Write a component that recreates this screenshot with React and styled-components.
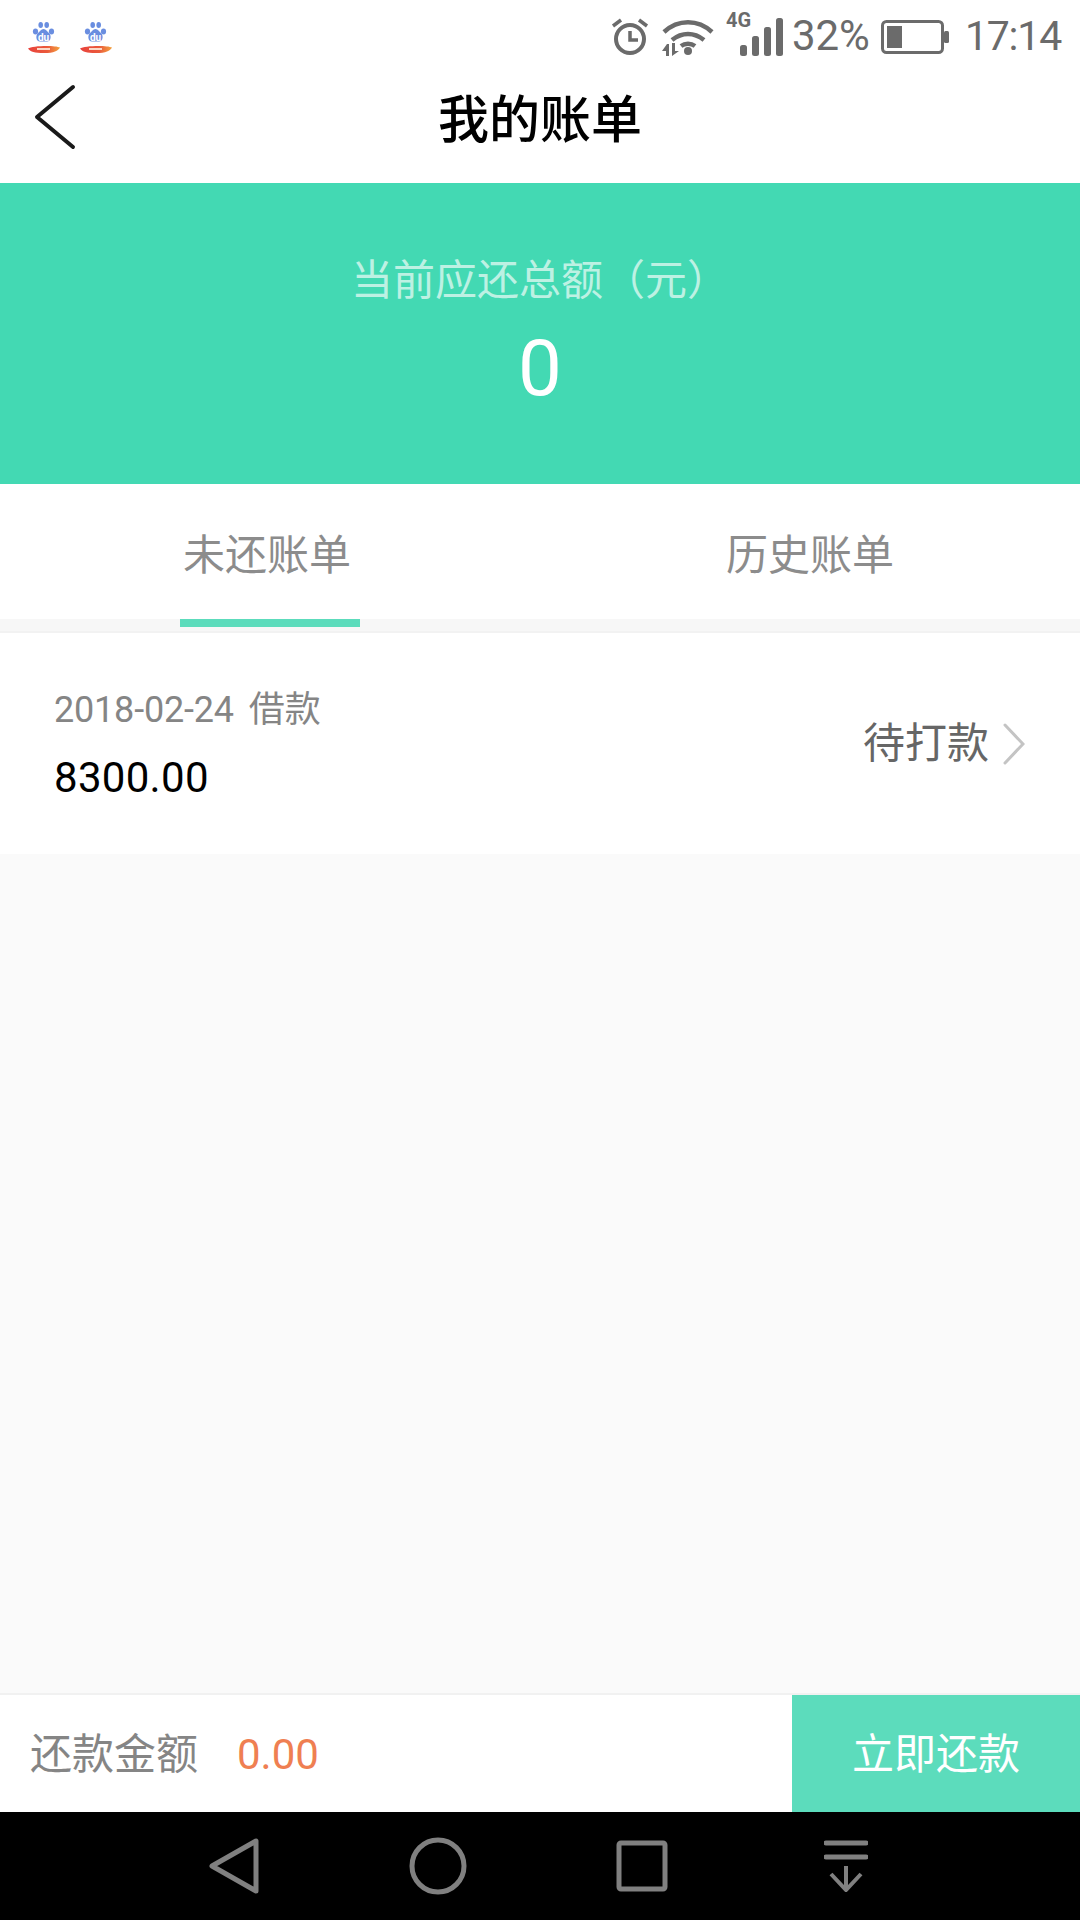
import React from "react";
import styled, { createGlobalStyle } from "styled-components";

const GlobalStyle = createGlobalStyle`
  html, body {
    margin: 0;
    padding: 0;
    background: #fafafa;
  }
  * {
    box-sizing: border-box;
  }
`;

const FONT = `Roboto, "Noto Sans CJK SC", sans-serif`;

const Page = styled.div`
  width: 1080px;
  height: 1920px;
  display: flex;
  flex-direction: column;
  background: #fafafa;
  font-family: ${FONT};
  overflow: hidden;
`;

const StatusBar = styled.div`
  height: 68px;
  background: #fff;
  display: flex;
  align-items: flex-start;
  padding: 12px 19px 0 28px;
  color: #6b6b6b;
`;

const AppIcons = styled.div`
  display: flex;
  gap: 20px;
  padding-top: 9px;
`;

const StatusRight = styled.div`
  margin-left: auto;
  display: flex;
  align-items: flex-start;
`;

const StatusText = styled.span`
  font-size: ${({ $size }) => $size || "41px"};
  line-height: 48px;
  letter-spacing: ${({ $spacing }) => $spacing || "0"};
  margin-left: ${({ $left }) => $left || "0"};
`;

const StatusIcon = styled.svg`
  display: block;
  flex: none;
  margin-left: ${({ $left }) => $left || "0"};
  margin-top: ${({ $top }) => $top || "0"};
`;

const TitleBar = styled.div`
  height: 115px;
  background: #fff;
  display: flex;
  align-items: center;
  justify-content: center;
  padding-bottom: 9px;
  position: relative;
`;

const BackIcon = styled.svg`
  position: absolute;
  left: 34px;
  top: 16px;
`;

const Title = styled.h1`
  margin: 0;
  font-size: 51px;
  font-weight: 500;
  line-height: 70px;
  color: #000;
`;

const Summary = styled.div`
  height: 301px;
  background: #43d9b3;
  display: flex;
  flex-direction: column;
  align-items: center;
  padding-top: 68px;
`;

const SummaryLabel = styled.div`
  font-size: 42px;
  line-height: 60px;
  color: #bdf1e3;
  white-space: pre;
`;

const SummaryValue = styled.div`
  font-size: 78px;
  line-height: 92px;
  color: #fff;
  margin-top: 12px;
`;

const Tabs = styled.div`
  height: 135px;
  background: #fff;
  display: grid;
  grid-template-columns: 540px 540px;
`;

const Tab = styled.div`
  display: flex;
  justify-content: center;
  padding-top: 42px;
  padding-right: ${({ $inset }) => $inset || "0"};
  font-size: 42px;
  line-height: 60px;
  color: #8c8c8c;
`;

const TabTrack = styled.div`
  height: 14px;
  background: #f7f7f7;
  border-bottom: 2px solid #f2f2f2;
  padding-left: 180px;
`;

const TabIndicator = styled.div`
  width: 180px;
  height: 8px;
  background: #5cdcbc;
`;

const BillRow = styled.div`
  height: 221px;
  background: #fff;
  display: flex;
  align-items: center;
  justify-content: space-between;
  padding: 0 55px 0 54px;
`;

const BillInfo = styled.div`
  display: flex;
  flex-direction: column;
  gap: 18px;
  margin-top: 1px;
`;

const BillMeta = styled.div`
  font-size: 36px;
  line-height: 50px;
  color: #858585;
  display: flex;
  gap: 15px;
`;

const BillDate = styled.span`
  letter-spacing: -0.2px;
`;

const BillAmount = styled.div`
  font-size: 42px;
  line-height: 50px;
  letter-spacing: 0.3px;
  color: #000;
`;

const BillStatus = styled.div`
  display: flex;
  align-items: center;
  gap: 14px;
  font-size: 42px;
  line-height: 60px;
  color: #666;
  margin-top: 1px;
`;

const Spacer = styled.div`
  flex: 1;
  background: #fafafa;
`;

const PayBar = styled.div`
  height: 119px;
  background: #fff;
  border-top: 2px solid #f1f1f1;
  display: flex;
  align-items: stretch;
`;

const PayLabel = styled.span`
  font-size: 42px;
  line-height: 119px;
  color: #858585;
  margin-left: 30px;
`;

const PayAmount = styled.span`
  font-size: 42px;
  line-height: 119px;
  color: #ef7f52;
  margin-left: 39px;
`;

const PayButton = styled.div`
  margin-left: auto;
  width: 288px;
  background: #5cdcbc;
  color: #fff;
  font-size: 42px;
  line-height: 119px;
  text-align: center;
`;

const NavBar = styled.div`
  height: 108px;
  background: #000;
  display: flex;
  align-items: center;
  padding-left: 209px;
`;

const NavIcon = styled.svg`
  display: block;
  flex: none;
  margin-left: ${({ $left }) => $left || "0"};
`;

const BaiduIcon = () => (
  <svg width="32" height="33" viewBox="0 0 32 33">
    <defs>
      <linearGradient id="ribbon" x1="0" x2="1" y1="0" y2="0">
        <stop offset="0" stopColor="#e8413c" />
        <stop offset="0.6" stopColor="#ea5a3c" />
        <stop offset="1" stopColor="#f3a23d" />
      </linearGradient>
    </defs>
    <g fill="#6a8ee0">
      <ellipse cx="7.5" cy="10.5" rx="2.6" ry="3" />
      <ellipse cx="12.7" cy="4" rx="2.3" ry="3" />
      <ellipse cx="18.7" cy="4" rx="2.3" ry="3" />
      <ellipse cx="23.5" cy="10.5" rx="2.6" ry="3" />
      <path d="M15.5 8c2.6 0 3.5 2.500 5.500 4 2.600 2.200 2.200 8.500-2 8.500h-7c-4.200 0-4.600-6.300-2-8.500 2-1.500 2.900-4 5.500-4z" />
    </g>
    <text x="15.500" y="19.500" textAnchor="middle" fontSize="10" fontWeight="700" fontFamily="Roboto, sans-serif" fill="#fff">du</text>
    <path d="M0 27.500C4 24.500 27 24 32 26.500 30 30 26 32 16 32S3 31 0 27.500z" fill="url(#ribbon)" />
    <rect x="9" y="27" width="13" height="2" fill="#fbd9c8" />
  </svg>
);

export default function App() {
  return (
    <Page>
      <GlobalStyle />
      <StatusBar>
        <AppIcons>
          <BaiduIcon />
          <BaiduIcon />
        </AppIcons>
        <StatusRight>
          <StatusIcon width="38" height="38" viewBox="0 0 38 38" $top="5px" fill="none" stroke="#6b6b6b">
            <circle cx="19" cy="22" r="14" strokeWidth="4" />
            <path d="M19 14v9h8" strokeWidth="3.500" />
            <path d="M2 9l8-6M36 9l-8-6" strokeWidth="3.500" />
          </StatusIcon>
          <StatusIcon width="54" height="40" viewBox="0 0 54 40" $left="12px" $top="5px" fill="none" stroke="#6b6b6b">
            <path d="M3 15C17 2 37 2 51 15" strokeWidth="4.500" />
            <path d="M11 23c10-8 22-8 32 0" strokeWidth="4.500" />
            <path d="M20 29c4-3 10-3 14 0" strokeWidth="4.500" />
            <circle cx="27" cy="34" r="4" fill="#6b6b6b" stroke="none" />
            <path d="M6 27l-5 7h4v5h3V27zM11 26h3v8h4l-7 5z" fill="#6b6b6b" stroke="none" />
          </StatusIcon>
          <StatusIcon width="58" height="50" viewBox="0 -6 58 50" $left="11px" $top="-6px" fill="#6b6b6b">
            <text x="0" y="15" fontFamily="Roboto, sans-serif" fontWeight="700" fontSize="20">4G</text>
            <rect x="14" y="33" width="7" height="11" rx="2.500" />
            <rect x="26" y="24" width="7" height="20" rx="2.500" />
            <rect x="38" y="15" width="7" height="29" rx="2.500" />
            <rect x="50" y="6" width="7" height="38" rx="2.500" />
          </StatusIcon>
          <StatusText $left="8px" $size="42px">32%</StatusText>
          <StatusIcon width="68" height="34" viewBox="0 0 68 34" $left="11px" $top="8px" fill="none">
            <rect x="1.500" y="1.500" width="60" height="31" rx="4" stroke="#6b6b6b" strokeWidth="3" />
            <rect x="6" y="6" width="15" height="22" fill="#6b6b6b" />
            <rect x="63" y="11" width="5" height="12" rx="1.500" fill="#6b6b6b" />
          </StatusIcon>
          <StatusText $left="16px" $spacing="-1.200px">17:14</StatusText>
        </StatusRight>
      </StatusBar>

      <TitleBar>
        <BackIcon width="44" height="68" viewBox="0 0 44 68" fill="none" stroke="#1a1a1a" strokeWidth="4" strokeLinecap="round" strokeLinejoin="round">
          <path d="M39 3L3 33l36 30" />
        </BackIcon>
        <Title>我的账单</Title>
      </TitleBar>

      <Summary>
        <SummaryLabel>当前应还总额（元）</SummaryLabel>
        <SummaryValue>0</SummaryValue>
      </Summary>

      <Tabs>
        <Tab $inset="6px">未还账单</Tab>
        <Tab>历史账单</Tab>
      </Tabs>
      <TabTrack>
        <TabIndicator />
      </TabTrack>

      <BillRow>
        <BillInfo>
          <BillMeta>
            <BillDate>2018-02-24</BillDate>
            <span>借款</span>
          </BillMeta>
          <BillAmount>8300.00</BillAmount>
        </BillInfo>
        <BillStatus>
          待打款
          <svg width="22" height="42" viewBox="0 0 22 42" fill="none" stroke="#c4c4c4" strokeWidth="3" strokeLinecap="round">
            <path d="M2 2l18 19L2 40" />
          </svg>
        </BillStatus>
      </BillRow>

      <Spacer />

      <PayBar>
        <PayLabel>还款金额</PayLabel>
        <PayAmount>0.00</PayAmount>
        <PayButton>立即还款</PayButton>
      </PayBar>

      <NavBar>
        <NavIcon width="50" height="56" viewBox="0 0 50 56" fill="none" stroke="#808080" strokeWidth="5" strokeLinejoin="round">
          <path d="M47 3v50L3 28z" />
        </NavIcon>
        <NavIcon width="58" height="58" viewBox="0 0 58 58" $left="150px" fill="none" stroke="#808080" strokeWidth="5">
          <circle cx="29" cy="29" r="26" />
        </NavIcon>
        <NavIcon width="52" height="52" viewBox="0 0 52 52" $left="149px" fill="none" stroke="#808080" strokeWidth="5" strokeLinejoin="round">
          <rect x="3" y="3" width="46" height="46" rx="2" />
        </NavIcon>
        <NavIcon width="44" height="52" viewBox="0 0 44 52" $left="156px" fill="none" stroke="#808080">
          <path d="M2 3h40M2 17h40" strokeWidth="5" strokeLinecap="round" />
          <path d="M22 26v23M7 34l15 16 15-16" strokeWidth="4" />
        </NavIcon>
      </NavBar>
    </Page>
  );
}
